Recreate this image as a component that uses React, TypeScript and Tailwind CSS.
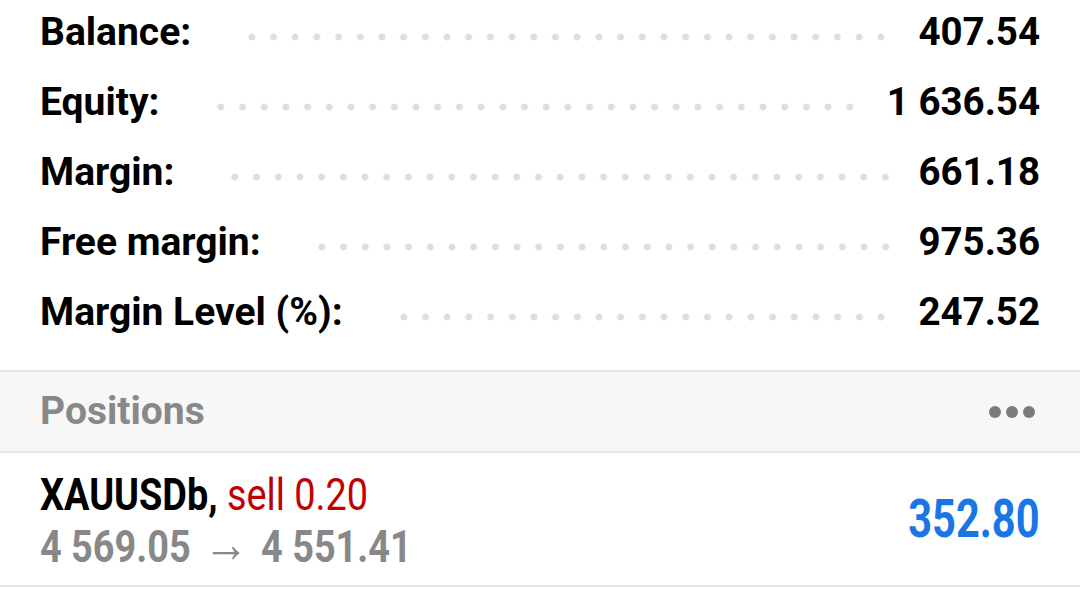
import { Fragment } from 'react';

const ACCOUNT_ROWS = [
  { label: 'Balance:', value: '407.54' },
  { label: 'Equity:', value: '1 636.54' },
  { label: 'Margin:', value: '661.18' },
  { label: 'Free margin:', value: '975.36' },
  { label: 'Margin Level (%):', value: '247.52' },
];

function LeaderDots() {
  return (
    <div className="mt-[10px] ml-[50px] mr-[26px] h-[8px] flex-1 bg-[radial-gradient(circle,#dedede_3.2px,transparent_3.8px)] bg-[length:21.7px_8px] bg-space" />
  );
}

function AccountRow({ label, value }: { label: string; value: string }) {
  return (
    <div className="flex h-[70px] items-center">
      <span className="whitespace-nowrap text-[39px] font-bold leading-none text-black">{label}</span>
      <LeaderDots />
      <span className="whitespace-nowrap text-[38.5px] font-bold leading-none text-black">{value}</span>
    </div>
  );
}

export default function App() {
  return (
    <div className="h-[608px] w-full overflow-hidden bg-white font-['Roboto','Liberation_Sans',sans-serif]">
      <div className="-mt-[3px] px-10 pb-[23px]">
        {ACCOUNT_ROWS.map((row) => (
          <Fragment key={row.label}>
            <AccountRow label={row.label} value={row.value} />
          </Fragment>
        ))}
      </div>

      <div className="flex h-[83px] items-center justify-between border-y-2 border-[#e6e6e6] bg-[#f7f7f7] pl-10 pr-[45px]">
        <span className="text-[39px] font-bold leading-none text-[#888888]">Positions</span>
        <div className="flex gap-[5px]">
          <span className="h-3 w-3 rounded-full bg-[#7b7b7b]" />
          <span className="h-3 w-3 rounded-full bg-[#7b7b7b]" />
          <span className="h-3 w-3 rounded-full bg-[#7b7b7b]" />
        </div>
      </div>

      <div className="flex h-[134px] items-center justify-between border-b-2 border-[#e6e6e6] px-10">
        <div className="flex flex-col gap-[6px] pt-[4px]">
          <div className="origin-left scale-x-[0.86] whitespace-nowrap text-[44px] font-bold leading-[44px]">
            <span className="text-black">XAUUSDb, </span>
            <span className="font-normal text-[#c00000]">sell 0.20</span>
          </div>
          <div className="origin-left scale-x-[0.86] whitespace-nowrap text-[44px] font-bold leading-[44px] text-[#888888]">
            4 569.05 <span className="inline-block px-[4px] text-[52px] font-normal leading-[44px]">→</span> 4 551.41
          </div>
        </div>
        <span className="origin-right scale-x-[0.77] whitespace-nowrap text-[54px] font-bold leading-none text-[#1976e3]">
          352.80
        </span>
      </div>
    </div>
  );
}
